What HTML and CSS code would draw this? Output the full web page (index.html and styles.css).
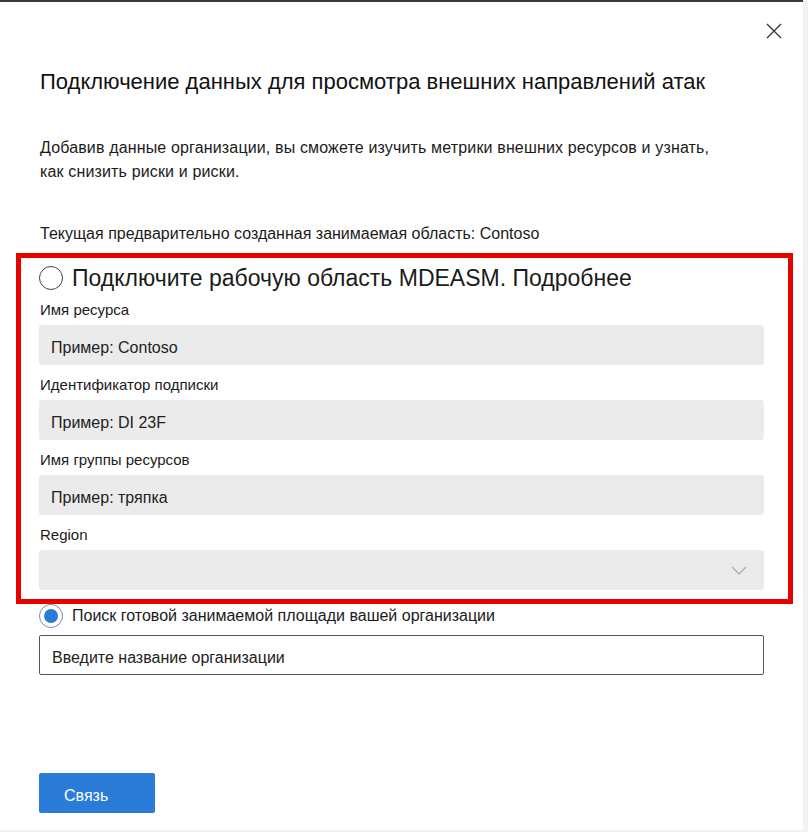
FILE: index.html
```html
<!doctype html>
<html lang="ru">
<head>
    <meta charset="utf-8">
    <meta name="viewport" content="width=device-width, initial-scale=1.0">
    <title>Подключение данных</title>
    <link rel="stylesheet" href="styles.css">
</head>
<body>
    <div class="panel">
        <div class="panel-header">
            <button class="close" aria-label="Закрыть">
                <svg width="16" height="16" viewBox="0 0 16 16">
                    <path d="M1 1 L15 15 M15 1 L1 15" stroke="#333" stroke-width="1.3" fill="none"/>
                </svg>
            </button>
        </div>

        <h1 class="title">Подключение данных для просмотра внешних направлений атак</h1>

        <p class="intro">Добавив данные организации, вы сможете изучить метрики внешних ресурсов и узнать,<br>как снизить риски и риски.</p>

        <p class="current">Текущая предварительно созданная занимаемая область: Contoso</p>

        <div class="highlight">
            <label class="option option-large">
                <span class="radio"></span>
                <span>Подключите рабочую область MDEASM. Подробнее</span>
            </label>

            <div class="field">
                <label class="field-label">Имя ресурса</label>
                <input class="field-input" type="text" placeholder="Пример: Contoso">
            </div>
            <div class="field">
                <label class="field-label">Идентификатор подписки</label>
                <input class="field-input" type="text" placeholder="Пример: DI 23F">
            </div>
            <div class="field">
                <label class="field-label">Имя группы ресурсов</label>
                <input class="field-input" type="text" placeholder="Пример: тряпка">
            </div>
            <div class="field">
                <label class="field-label">Region</label>
                <div class="field-input select">
                    <svg width="16" height="9" viewBox="0 0 16 9">
                        <path d="M1 1 L8 8 L15 1" stroke="#a6a6a6" stroke-width="1.2" fill="none"/>
                    </svg>
                </div>
            </div>
        </div>

        <label class="option">
            <span class="radio checked"></span>
            <span>Поиск готовой занимаемой площади вашей организации</span>
        </label>

        <input class="org-input" type="text" placeholder="Введите название организации">

        <button class="primary">Связь</button>
    </div>
</body>
</html>
```

FILE: styles.css
```css
body {
    margin: 0;
    background-color: #f2f2f2;
    font-family: "Liberation Sans", Arial, sans-serif;
    color: #1b1b1b;
}
.panel {
    width: 803px;
    height: 830px;
    background: #fff;
    border-top: 2px solid #3a3a3a;
    padding-left: 39px;
    box-sizing: border-box;
}
.panel-header {
    display: flex;
    justify-content: flex-end;
    padding: 21px 21px 0 0;
}
.close {
    background: none;
    border: none;
    padding: 0;
    width: 16px;
    height: 16px;
    cursor: pointer;
}
.title {
    margin: 29px 0 0 1px;
    font-size: 22px;
    font-weight: normal;
    line-height: 28px;
    color: #111;
}
.intro {
    margin: 40px 0 0 1px;
    font-size: 16px;
    letter-spacing: 0.15px;
    line-height: 24px;
}
.current {
    margin: 38px 0 0 1px;
    font-size: 16px;
    line-height: 24px;
}
.highlight {
    margin: 7px 0 0 -23px;
    width: 777px;
    border: 5px solid #e60000;
    padding: 5px 0 9px 18px;
    box-sizing: border-box;
}
.option {
    display: flex;
    align-items: center;
    gap: 9px;
    font-size: 16px;
    line-height: 24px;
}
.option-large {
    font-size: 23px;
    line-height: 30px;
}
.radio {
    width: 24px;
    height: 24px;
    border: 1.5px solid #444;
    border-radius: 50%;
    box-sizing: border-box;
    flex: none;
    position: relative;
}
.radio.checked {
    border: 1px solid #6d8fb8;
}
.radio.checked::after {
    content: "";
    position: absolute;
    left: 4px;
    top: 4px;
    width: 14px;
    height: 14px;
    border-radius: 50%;
    background: #2b7cd9;
}
.field {
    display: flex;
    flex-direction: column;
}
.field-label {
    font-size: 15px;
    line-height: 20px;
    margin: 10px 0 5px 1px;
}
.option-large + .field .field-label {
    margin-top: 7px;
}
.field-input {
    width: 725px;
    height: 40px;
    border: none;
    border-radius: 3px;
    background: #ebebeb;
    padding: 5px 12px 0;
    box-sizing: border-box;
    font-family: inherit;
    font-size: 16px;
    color: #222;
}
.field-input::placeholder,
.org-input::placeholder {
    color: #222;
    opacity: 1;
}
.select {
    display: flex;
    justify-content: flex-end;
    align-items: center;
    padding: 0 17px 0 12px;
}
.org-input {
    display: block;
    margin-top: 7px;
    width: 725px;
    height: 40px;
    border: 1px solid #555;
    border-radius: 2px;
    padding: 5px 12px 0;
    box-sizing: border-box;
    font-family: inherit;
    font-size: 16px;
    color: #222;
}
.primary {
    display: block;
    margin-top: 98px;
    width: 116px;
    height: 40px;
    border: none;
    border-radius: 2px;
    background: #2b7cd9;
    color: #fff;
    font-family: inherit;
    font-size: 16px;
    text-align: left;
    padding: 5px 0 0 25px;
    cursor: pointer;
}
```
